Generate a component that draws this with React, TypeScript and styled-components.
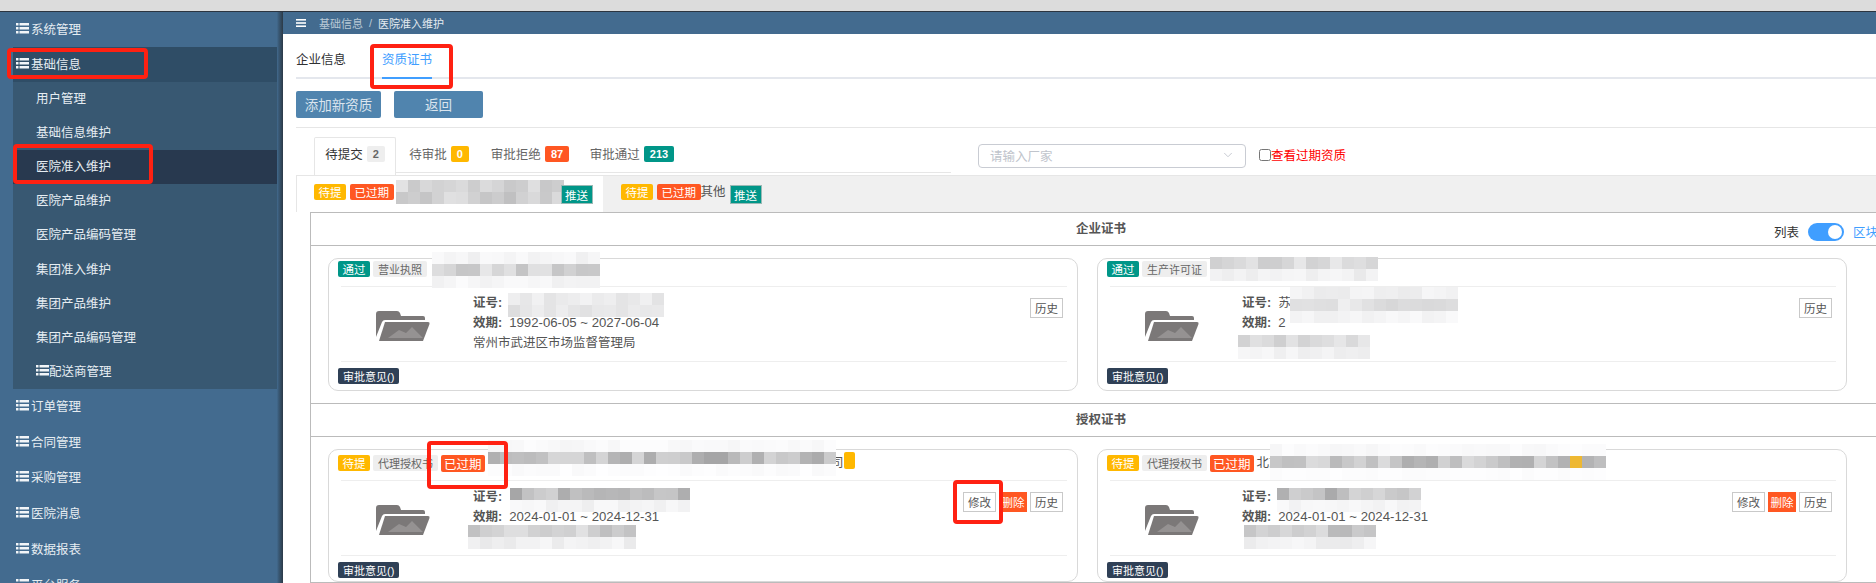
import React from 'react'
import styled, { createGlobalStyle } from 'styled-components'
import { ChevronDown } from 'lucide-react'

const GlobalStyle = createGlobalStyle`
  html, body {
    margin: 0;
    padding: 0;
    background: #ffffff;
  }
  * {
    box-sizing: border-box;
  }
  body {
    font-family: "Liberation Sans", "Noto Sans CJK SC", sans-serif;
    font-size: 12.5px;
    color: #555555;
  }
`

const Page = styled.div`
  position: relative;
  width: 1876px;
  height: 583px;
  overflow: hidden;
`

const WindowEdge = styled.div`
  height: 12px;
  background: #dcdcdc;
  border-bottom: 1px solid #2c3540;
`

const Shell = styled.div`
  display: flex;
  height: 571px;
`

const Sidebar = styled.nav`
  flex: 0 0 283px;
  padding-right: 6px;
  overflow: hidden;
  background: linear-gradient(to right, #436b8f 277px, #3c5f7e 278px, #2c3a47 283px);
  color: #e6edf2;
`

const MenuItem = styled.div<{ $open?: boolean; $h?: number }>`
  display: flex;
  align-items: center;
  gap: 2px;
  height: ${p => p.$h ?? 35.8}px;
  padding-left: ${p => (p.$open ? 3 : 16)}px;
  padding-bottom: 3px;
  margin-left: ${p => (p.$open ? 13 : 0)}px;
  background: ${p => (p.$open ? '#2f4d66' : 'transparent')};
`

const SubMenu = styled.div`
  margin-left: 13px;
  background: #385872;
`

const SubItem = styled.div<{ $active?: boolean }>`
  display: flex;
  align-items: center;
  height: 34.1px;
  padding-left: 23px;
  padding-bottom: 3px;
  background: ${p => (p.$active ? '#28394f' : 'transparent')};
`

const Main = styled.main`
  flex: 1;
  min-width: 0;
  overflow: hidden;
  background: #ffffff;
`

const TopBar = styled.header`
  display: flex;
  align-items: center;
  gap: 13px;
  height: 22px;
  padding-left: 13px;
  background: #436b8f;
  font-size: 11px;
  color: #b9c9d6;
`

const Breadcrumb = styled.div`
  display: flex;
  align-items: center;
  gap: 6px;
`

const Crumb = styled.span<{ $current?: boolean }>`
  color: ${p => (p.$current ? '#e3eaf0' : '#b9c9d6')};
`

const Content = styled.div`
  padding-left: 13px;
`

const TabBar = styled.div`
  display: flex;
  gap: 36px;
  height: 45px;
  border-bottom: 2px solid #e4e7ed;
`

const Tab = styled.div<{ $active?: boolean }>`
  display: flex;
  align-items: center;
  height: 45px;
  padding-top: 6px;
  color: ${p => (p.$active ? '#409eff' : '#303133')};
  border-bottom: 2px solid ${p => (p.$active ? '#409eff' : 'transparent')};
`

const Toolbar = styled.div`
  display: flex;
  gap: 13px;
  padding: 12px 0 9px;
  border-bottom: 1px solid #e6e6e6;
`

const ActionButton = styled.button<{ $w: number }>`
  width: ${p => p.$w}px;
  height: 27px;
  padding: 0 0 2px;
  border: 0;
  border-radius: 2px;
  background: #5084ae;
  color: #dbe5ee;
  font: inherit;
  font-size: 13.5px;
`

const StatusRow = styled.div`
  display: flex;
  height: 47px;
  padding-left: 18px;
`

const StatusTabs = styled.div`
  display: flex;
  align-items: flex-start;
  width: 637px;
  height: 45px;
  padding-top: 9px;
  border-bottom: 1px solid #e6e6e6;
`

const StatusTab = styled.div<{ $active?: boolean; $w: number }>`
  display: flex;
  align-items: center;
  justify-content: center;
  gap: 4px;
  width: ${p => p.$w}px;
  height: ${p => (p.$active ? 38 : 35)}px;
  padding-bottom: ${p => (p.$active ? 6 : 3)}px;
  color: ${p => (p.$active ? '#333333' : '#666666')};
  background: #ffffff;
  border: 1px solid ${p => (p.$active ? '#e6e6e6' : 'transparent')};
  border-bottom: 0;
  border-radius: 2px 2px 0 0;
`

const CountBadge = styled.span<{ $bg: string; $fg?: string }>`
  display: inline-flex;
  align-items: center;
  justify-content: center;
  height: 16px;
  padding: 0 6px;
  border-radius: 2px;
  background: ${p => p.$bg};
  color: ${p => p.$fg ?? '#ffffff'};
  font-size: 11px;
  font-weight: 700;
`

const FilterGroup = styled.div`
  display: flex;
  align-items: flex-start;
  margin-left: 27px;
  padding-top: 16px;
`

const FakeSelect = styled.div`
  display: flex;
  align-items: center;
  justify-content: space-between;
  width: 268px;
  height: 24px;
  padding: 0 10px 2px 11px;
  border: 1px solid #c9ccd3;
  border-radius: 4px;
  color: #c0c4cc;
`

const ExpiredCheck = styled.label`
  display: flex;
  align-items: center;
  height: 24px;
  margin-left: 13px;
  padding-bottom: 3px;
  color: #ff0000;
  input {
    width: 12px;
    height: 12px;
    margin: 0;
  }
`

const DocTabs = styled.div`
  display: flex;
  height: 37px;
  background: #f0f0f0;
  border-top: 1px solid #e6e6e6;
`

const DocTab = styled.div<{ $active?: boolean; $w: number }>`
  display: flex;
  align-items: flex-start;
  gap: 4px;
  width: ${p => p.$w}px;
  padding: 8px 0 0 17px;
  background: ${p => (p.$active ? '#ffffff' : 'transparent')};
  border-left: 1px solid ${p => (p.$active ? '#e6e6e6' : 'transparent')};
`

const PushButton = styled.span<{ $ml: number }>`
  position: relative;
  z-index: 4;
  display: inline-flex;
  align-items: center;
  justify-content: center;
  width: 32px;
  height: 19px;
  margin-left: ${p => p.$ml}px;
  margin-top: 1px;
  background: #009688;
  border: 1px solid #9ab9b5;
  color: #ffffff;
  font-size: 11.5px;
`

const Board = styled.div`
  width: 1582px;
  margin-left: 14px;
  border: 1px solid #bbbbbb;
  border-width: 1px 1px 0 1px;
`

const SectionTitle = styled.div`
  display: grid;
  grid-template-columns: 1fr auto 1fr;
  align-items: center;
  height: 33px;
  padding-bottom: 3px;
  border-bottom: 1px solid #bbbbbb;
  font-weight: 700;
  color: #555555;
`

const TitleText = styled.span`
  grid-column: 2;
`

const ViewSwitch = styled.div`
  grid-column: 3;
  display: flex;
  align-items: center;
  justify-content: flex-end;
  gap: 9px;
  padding: 8px 13px 0 0;
  font-weight: 400;
  color: #333333;
`

const SwitchTrack = styled.span`
  display: flex;
  align-items: center;
  justify-content: flex-end;
  width: 36px;
  height: 18px;
  padding-right: 1px;
  border-radius: 9px;
  background: #409eff;
`

const SwitchKnob = styled.span`
  width: 14px;
  height: 14px;
  margin-right: 1px;
  border-radius: 50%;
  background: #ffffff;
`

const BlueLabel = styled.span`
  color: #409eff;
`

const CardGrid = styled.div<{ $pb: number }>`
  display: grid;
  grid-template-columns: 750px 750px;
  gap: 19px;
  padding: 12px 0 ${p => p.$pb}px 17px;
  border-bottom: 1px solid #bbbbbb;
`

const Card = styled.section`
  height: 133px;
  border: 1px solid #d9d9d9;
  border-radius: 10px;
`

const CardHead = styled.div<{ $h: number }>`
  display: flex;
  align-items: flex-start;
  gap: 3px;
  height: ${p => p.$h}px;
  margin: 0 10px 0 9px;
  padding-top: ${p => p.$h - 25}px;
  white-space: nowrap;
`

const Tag = styled.span<{ $bg: string; $big?: boolean }>`
  display: inline-flex;
  align-items: center;
  justify-content: center;
  flex: none;
  height: ${p => (p.$big ? 17 : 16)}px;
  padding: 0 ${p => (p.$big ? 3 : 4.5)}px;
  border-radius: 2px;
  background: ${p => p.$bg};
  color: #ffffff;
  font-size: ${p => (p.$big ? 12.5 : 11.5)}px;
`

const KindTag = styled.span`
  display: inline-flex;
  align-items: center;
  flex: none;
  height: 16px;
  padding: 0 5px;
  border-radius: 2px;
  background: #eeeeee;
  color: #666666;
  font-size: 11px;
`

const MarkerTag = styled.span`
  flex: none;
  width: 11px;
  height: 17px;
  margin: -3px 0 0 -3px;
  border-radius: 2px;
  background: #ffb800;
`

const NameText = styled.span<{ $ml?: number }>`
  margin-left: ${p => p.$ml ?? 0}px;
  line-height: 16px;
  color: #555555;
`

const NameFill = styled.span<{ $w: number }>`
  width: ${p => p.$w}px;
  text-align: right;
  line-height: 16px;
`

const CardBody = styled.div`
  display: flex;
  height: 76px;
  margin: 0 10px 0 12px;
  padding-left: 35px;
  border-top: 1px solid #eeeeee;
  border-bottom: 1px solid #eeeeee;
`

const FolderIcon = styled.svg`
  flex: none;
  width: 54px;
  height: 30px;
  margin-top: 24px;
`

const CertInfo = styled.div`
  flex: 1;
  margin-left: 43px;
  padding-top: 6px;
  line-height: 20.2px;
`

const InfoLabel = styled.b`
  font-weight: 700;
  margin-right: 7px;
`

const InfoValue = styled.span`
  font-size: 13.2px;
`

const CertActions = styled.div`
  display: flex;
  align-items: flex-start;
  gap: 3px;
  padding: 11px 4px 0 0;
`

const SmallButton = styled.span<{ $danger?: boolean }>`
  display: inline-flex;
  align-items: center;
  justify-content: center;
  width: ${p => (p.$danger ? 28 : 33)}px;
  height: 20px;
  border: 1px solid ${p => (p.$danger ? '#ff5722' : '#c9c9c9')};
  background: ${p => (p.$danger ? '#ff5722' : '#ffffff')};
  color: ${p => (p.$danger ? '#ffffff' : '#555555')};
  font-size: 11.5px;
`

const CardFoot = styled.div`
  display: flex;
  padding: 6px 0 0 9px;
`

const OpinionTag = styled.span`
  display: inline-flex;
  align-items: center;
  height: 16px;
  padding: 0 5px;
  border-radius: 2px;
  background: #2f4056;
  color: #ffffff;
  font-size: 11px;
`

// red marks somebody drew over the screenshot
const Annotation = styled.div<{ $x: number; $y: number; $w: number; $h: number }>`
  position: absolute;
  left: ${p => p.$x}px;
  top: ${p => p.$y}px;
  width: ${p => p.$w}px;
  height: ${p => p.$h}px;
  border: 4px solid #ff2112;
  border-radius: 4px;
  z-index: 5;
`

// pixelated patches hiding company names and licence numbers
const MosaicPatch = styled.div<{ $x: number; $y: number; $cols: number }>`
  position: absolute;
  left: ${p => p.$x}px;
  top: ${p => p.$y}px;
  display: grid;
  grid-template-columns: repeat(${p => p.$cols}, 12px);
  grid-auto-rows: 12px;
  z-index: 3;
`

const ListGlyph = () => (
  <svg width="13" height="11" viewBox="0 0 13 11" fill="#f2f5f8">
    <rect x="0" y="0" width="2.5" height="2.5" />
    <rect x="3.5" y="0" width="9.5" height="2.5" />
    <rect x="0" y="4" width="2.5" height="2.5" />
    <rect x="3.5" y="4" width="9.5" height="2.5" />
    <rect x="0" y="8" width="2.5" height="2.5" />
    <rect x="3.5" y="8" width="9.5" height="2.5" />
  </svg>
)

const BurgerGlyph = () => (
  <svg width="10" height="8" viewBox="0 0 10 8" fill="#ffffff">
    <rect width="10" height="1.6" />
    <rect y="3.2" width="10" height="1.6" />
    <rect y="6.4" width="10" height="1.6" />
  </svg>
)

const Folder = () => (
  <FolderIcon viewBox="0 0 54 30">
    <path fill="#7b7878" d="M0 3Q0 0 3 0H21Q23 0 24 2L25 5H47Q49 5 49 7V9H9Q7 9 6 11L0 26Z" />
    <path fill="#7b7878" d="M9 11H52Q54 11 53.500 13L47 30H3Z" />
    <path fill="#959292" d="M12 27L23 19L30 22L36 16L47 27Z" />
  </FolderIcon>
)

const shade = (seed: number, lo: number, hi: number) => {
  const r = Math.abs(Math.sin(seed * 12.9898) * 43758.5453) % 1
  const v = Math.round(lo + (hi - lo) * r)
  return `rgb(${v},${v},${v + 1})`
}

type PatchSpec = { x: number; y: number; cols: number; rows: [number, number][]; hot?: [number, number] }

const patches: PatchSpec[] = [
  { x: 396, y: 180, cols: 14, rows: [[200, 228], [190, 225]] },
  { x: 432, y: 252, cols: 14, rows: [[238, 250], [190, 232], [240, 252]] },
  { x: 508, y: 293, cols: 13, rows: [[225, 245], [220, 240]] },
  { x: 1210, y: 257, cols: 14, rows: [[205, 235], [232, 248]] },
  { x: 1290, y: 287, cols: 14, rows: [[232, 248], [215, 240], [235, 250]] },
  { x: 1238, y: 335, cols: 11, rows: [[205, 232], [232, 248]] },
  { x: 488, y: 440, cols: 29, rows: [[245, 253], [165, 215], [248, 254]] },
  { x: 510, y: 488, cols: 15, rows: [[165, 215], [238, 250]] },
  { x: 468, y: 525, cols: 14, rows: [[190, 225], [232, 248]] },
  { x: 1270, y: 444, cols: 28, rows: [[245, 253], [170, 220], [250, 254]], hot: [1, 25] },
  { x: 1277, y: 488, cols: 12, rows: [[170, 215], [240, 250]] },
  { x: 1244, y: 525, cols: 11, rows: [[185, 225], [232, 248]] },
]

const Mosaic = ({ spec, index }: { spec: PatchSpec; index: number }) => (
  <MosaicPatch $x={spec.x} $y={spec.y} $cols={spec.cols}>
    {spec.rows.flatMap((tone, r) =>
      Array.from({ length: spec.cols }, (_, c) => {
        const hot = spec.hot && spec.hot[0] === r && spec.hot[1] === c
        return (
          <div
            key={`${r}-${c}`}
            style={{ background: hot ? '#eeb832' : shade(index * 97 + r * 31 + c + 1, tone[0], tone[1]) }}
          />
        )
      }),
    )}
  </MosaicPatch>
)

const topBefore = ['系统管理']
const topAfter = ['订单管理', '合同管理', '采购管理', '医院消息', '数据报表', '平台服务']
const subItems = ['用户管理', '基础信息维护', '医院准入维护', '医院产品维护', '医院产品编码管理', '集团准入维护', '集团产品维护', '集团产品编码管理']

const GRAY = '#eeeeee'
const YELLOW = '#ffb800'
const ORANGE = '#ff5722'
const TEAL = '#009688'

export default function App() {
  return (
    <Page>
      <GlobalStyle />
      <WindowEdge />
      <Shell>
        <Sidebar>
          {topBefore.map(name => (
            <MenuItem key={name} $h={35}>
              <ListGlyph />
              {name}
            </MenuItem>
          ))}
          <MenuItem $open $h={35}>
            <ListGlyph />
            基础信息
          </MenuItem>
          <SubMenu>
            {subItems.map(name => (
              <SubItem key={name} $active={name === '医院准入维护'}>
                {name}
              </SubItem>
            ))}
            <SubItem>
              <ListGlyph />
              配送商管理
            </SubItem>
          </SubMenu>
          {topAfter.map(name => (
            <MenuItem key={name}>
              <ListGlyph />
              {name}
            </MenuItem>
          ))}
        </Sidebar>
        <Main>
          <TopBar>
            <BurgerGlyph />
            <Breadcrumb>
              <Crumb>基础信息</Crumb>
              <span>/</span>
              <Crumb $current>医院准入维护</Crumb>
            </Breadcrumb>
          </TopBar>
          <Content>
            <TabBar>
              <Tab>企业信息</Tab>
              <Tab $active>资质证书</Tab>
            </TabBar>
            <Toolbar>
              <ActionButton $w={85}>添加新资质</ActionButton>
              <ActionButton $w={89}>返回</ActionButton>
            </Toolbar>
            <StatusRow>
              <StatusTabs>
                <StatusTab $active $w={82}>
                  待提交<CountBadge $bg={GRAY} $fg="#666666">2</CountBadge>
                </StatusTab>
                <StatusTab $w={86}>
                  待审批<CountBadge $bg={YELLOW}>0</CountBadge>
                </StatusTab>
                <StatusTab $w={96}>
                  审批拒绝<CountBadge $bg={ORANGE}>87</CountBadge>
                </StatusTab>
                <StatusTab $w={108}>
                  审批通过<CountBadge $bg={TEAL}>213</CountBadge>
                </StatusTab>
              </StatusTabs>
              <FilterGroup>
                <FakeSelect>
                  请输入厂家
                  <ChevronDown size={14} strokeWidth={1.5} color="#c0c4cc" />
                </FakeSelect>
                <ExpiredCheck>
                  <input type="checkbox" />
                  查看过期资质
                </ExpiredCheck>
              </FilterGroup>
            </StatusRow>
            <DocTabs>
              <DocTab $active $w={307}>
                <Tag $bg={YELLOW}>待提</Tag>
                <Tag $bg={ORANGE}>已过期</Tag>
                <PushButton $ml={163}>推送</PushButton>
              </DocTab>
              <DocTab $w={300}>
                <Tag $bg={YELLOW}>待提</Tag>
                <Tag $bg={ORANGE}>已过期</Tag>
                <NameText $ml={-4}>其他</NameText>
                <PushButton $ml={0}>推送</PushButton>
              </DocTab>
            </DocTabs>
            <Board>
              <SectionTitle>
                <TitleText>企业证书</TitleText>
                <ViewSwitch>
                  列表
                  <SwitchTrack>
                    <SwitchKnob />
                  </SwitchTrack>
                  <BlueLabel>区块</BlueLabel>
                </ViewSwitch>
              </SectionTitle>
              <CardGrid $pb={12}>
                <Card>
                  <CardHead $h={27}>
                    <Tag $bg={TEAL}>通过</Tag>
                    <KindTag>营业执照</KindTag>
                  </CardHead>
                  <CardBody>
                    <Folder />
                    <CertInfo>
                      <div><InfoLabel>证号:</InfoLabel></div>
                      <div><InfoLabel>效期:</InfoLabel><InfoValue>1992-06-05 ~ 2027-06-04</InfoValue></div>
                      <div>常州市武进区市场监督管理局</div>
                    </CertInfo>
                    <CertActions>
                      <SmallButton>历史</SmallButton>
                    </CertActions>
                  </CardBody>
                  <CardFoot>
                    <OpinionTag>审批意见()</OpinionTag>
                  </CardFoot>
                </Card>
                <Card>
                  <CardHead $h={27}>
                    <Tag $bg={TEAL}>通过</Tag>
                    <KindTag>生产许可证</KindTag>
                  </CardHead>
                  <CardBody>
                    <Folder />
                    <CertInfo>
                      <div><InfoLabel>证号:</InfoLabel>苏</div>
                      <div><InfoLabel>效期:</InfoLabel><InfoValue>2</InfoValue></div>
                      <div />
                    </CertInfo>
                    <CertActions>
                      <SmallButton>历史</SmallButton>
                    </CertActions>
                  </CardBody>
                  <CardFoot>
                    <OpinionTag>审批意见()</OpinionTag>
                  </CardFoot>
                </Card>
              </CardGrid>
              <SectionTitle>
                <TitleText>授权证书</TitleText>
              </SectionTitle>
              <CardGrid $pb={0}>
                <Card>
                  <CardHead $h={30}>
                    <Tag $bg={YELLOW}>待提</Tag>
                    <KindTag>代理授权书</KindTag>
                    <Tag $big $bg={ORANGE}>已过期</Tag>
                    <NameFill $w={356}>司</NameFill>
                    <MarkerTag />
                  </CardHead>
                  <CardBody>
                    <Folder />
                    <CertInfo>
                      <div><InfoLabel>证号:</InfoLabel></div>
                      <div><InfoLabel>效期:</InfoLabel><InfoValue>2024-01-01 ~ 2024-12-31</InfoValue></div>
                    </CertInfo>
                    <CertActions>
                      <SmallButton>修改</SmallButton>
                      <SmallButton $danger>删除</SmallButton>
                      <SmallButton>历史</SmallButton>
                    </CertActions>
                  </CardBody>
                  <CardFoot>
                    <OpinionTag>审批意见()</OpinionTag>
                  </CardFoot>
                </Card>
                <Card>
                  <CardHead $h={30}>
                    <Tag $bg={YELLOW}>待提</Tag>
                    <KindTag>代理授权书</KindTag>
                    <Tag $big $bg={ORANGE}>已过期</Tag>
                    <NameText>北京</NameText>
                  </CardHead>
                  <CardBody>
                    <Folder />
                    <CertInfo>
                      <div><InfoLabel>证号:</InfoLabel></div>
                      <div><InfoLabel>效期:</InfoLabel><InfoValue>2024-01-01 ~ 2024-12-31</InfoValue></div>
                    </CertInfo>
                    <CertActions>
                      <SmallButton>修改</SmallButton>
                      <SmallButton $danger>删除</SmallButton>
                      <SmallButton>历史</SmallButton>
                    </CertActions>
                  </CardBody>
                  <CardFoot>
                    <OpinionTag>审批意见()</OpinionTag>
                  </CardFoot>
                </Card>
              </CardGrid>
            </Board>
          </Content>
        </Main>
      </Shell>
      {patches.map((spec, i) => (
        <Mosaic key={i} spec={spec} index={i} />
      ))}
      <Annotation $x={7} $y={48} $w={141} $h={31} />
      <Annotation $x={13} $y={144} $w={140} $h={40} />
      <Annotation $x={370} $y={44} $w={83} $h={45} />
      <Annotation $x={427} $y={441} $w={81} $h={48} />
      <Annotation $x={953} $y={480} $w={50} $h={44} />
    </Page>
  )
}
